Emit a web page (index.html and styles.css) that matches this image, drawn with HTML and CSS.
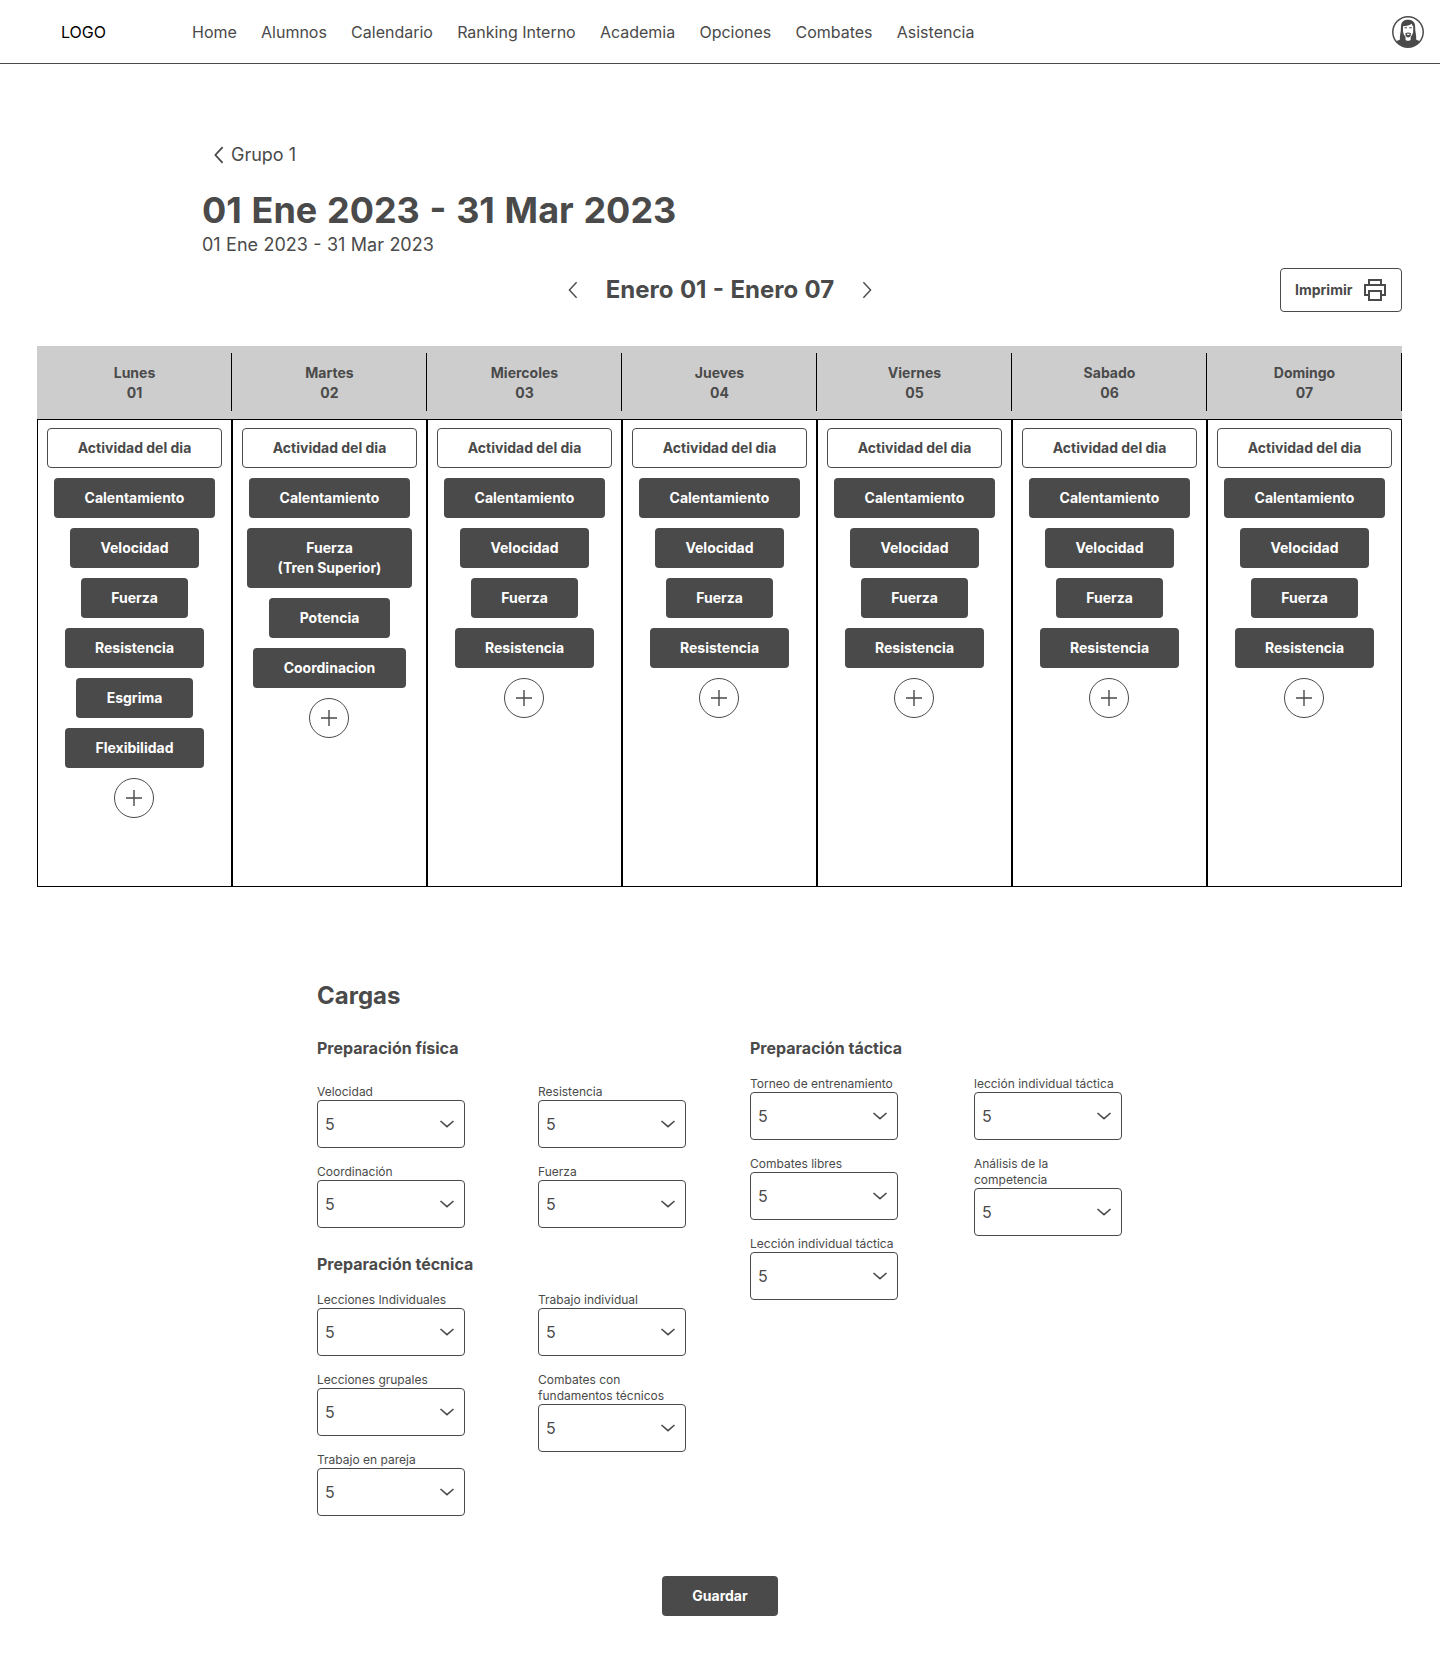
FILE: index.html
```html
<!DOCTYPE html>
<html lang="es">
<head>
<meta charset="utf-8">
<title>Grupo 1</title>
<link rel="stylesheet" href="styles.css">
</head>
<body>
<svg class="sprite" aria-hidden="true">
  <symbol id="left" viewBox="0 0 10 18"><path d="M8.6 1.2 1.4 9l7.2 7.8"/></symbol>
  <symbol id="right" viewBox="0 0 10 18"><path d="M1.4 1.2 8.6 9l-7.2 7.8"/></symbol>
  <symbol id="down" viewBox="0 0 16 8"><path d="M1.5 1 8 6.6 14.5 1"/></symbol>
  <symbol id="plus" viewBox="0 0 18 18"><path d="M9 1v16M1 9h16"/></symbol>
</svg>

<header class="topbar">
  <div class="logo">LOGO</div>
  <nav class="nav">
    <a>Home</a><a>Alumnos</a><a>Calendario</a><a>Ranking Interno</a><a>Academia</a><a>Opciones</a><a>Combates</a><a>Asistencia</a>
  </nav>
  <svg class="avatar" viewBox="0 0 32 32">
    <circle cx="16" cy="16" r="15.200" fill="#fff" stroke="#4a4a4a" stroke-width="1.500"/>
    <path fill="#4a4a4a" d="M15.500 3.800c3.500-.5 6.500 1.200 7.300 4.200.6 2.500.3 5.500.7 8 .4 2.500 1 4.800.6 7.500l3.600 1.700A15 15 0 0 1 16 31 15 15 0 0 1 4.300 25.200L8 23.500c-.4-2.700.2-5 .6-7.500.4-2.500.1-5.500.7-8 .6-2.400 3.300-4.400 6.200-4.200Z"/>
    <path fill="#fff" d="M11 10.300c3.800-.2 6.700-1 8.700-2.600.3 1.100.8 1.900 1.500 2.600v4.200c0 2.700-1 4.900-2.500 6.200v2.500c0 1-1.200 1.600-2.600 1.600s-2.600-.6-2.600-1.600v-2.500c-1.500-1.300-2.500-3.500-2.500-6.200Z"/>
    <path fill="#4a4a4a" d="M12.500 11.300H15v1h-2.500zM17.300 11.300h2.500v1h-2.500zM13.300 17.300c1.600-1.200 4.100-1.200 5.700 0l-.4 2.700c-.6.900-1.400 1.400-2.400 1.400s-1.900-.5-2.500-1.400Z"/>
    <path fill="#fff" d="M14.500 17.800h3.300c-.3.900-.9 1.300-1.600 1.300s-1.400-.4-1.700-1.300Z"/>
  </svg>
</header>

<main>
  <section class="intro">
    <a class="back"><svg class="chev bold"><use href="#left"/></svg>Grupo 1</a>
    <h1>01 Ene 2023 - 31 Mar 2023</h1>
    <p>01 Ene 2023 - 31 Mar 2023</p>
  </section>

  <section class="weekbar">
    <div class="week">
      <svg class="chev"><use href="#left"/></svg>
      <h2>Enero 01 - Enero 07</h2>
      <svg class="chev"><use href="#right"/></svg>
    </div>
    <button class="print">Imprimir
      <svg viewBox="0 0 22 22"><path d="M5 6V1h12v5M5 16H1V6h20v10h-4M5 12h12v9H5z"/></svg>
    </button>
  </section>

  <section class="calendar">
    <div class="day">
      <div class="dayhead"><span>Lunes<br>01</span></div>
      <div class="daybody">
        <button class="btn outline">Actividad del dia</button>
        <button class="btn">Calentamiento</button>
        <button class="btn">Velocidad</button>
        <button class="btn">Fuerza</button>
        <button class="btn">Resistencia</button>
        <button class="btn">Esgrima</button>
        <button class="btn">Flexibilidad</button>
        <button class="add"><svg><use href="#plus"/></svg></button>
      </div>
    </div>
    <div class="day">
      <div class="dayhead"><span>Martes<br>02</span></div>
      <div class="daybody">
        <button class="btn outline">Actividad del dia</button>
        <button class="btn">Calentamiento</button>
        <button class="btn">Fuerza<br>(Tren Superior)</button>
        <button class="btn">Potencia</button>
        <button class="btn">Coordinacion</button>
        <button class="add"><svg><use href="#plus"/></svg></button>
      </div>
    </div>
    <div class="day">
      <div class="dayhead"><span>Miercoles<br>03</span></div>
      <div class="daybody">
        <button class="btn outline">Actividad del dia</button>
        <button class="btn">Calentamiento</button>
        <button class="btn">Velocidad</button>
        <button class="btn">Fuerza</button>
        <button class="btn">Resistencia</button>
        <button class="add"><svg><use href="#plus"/></svg></button>
      </div>
    </div>
    <div class="day">
      <div class="dayhead"><span>Jueves<br>04</span></div>
      <div class="daybody">
        <button class="btn outline">Actividad del dia</button>
        <button class="btn">Calentamiento</button>
        <button class="btn">Velocidad</button>
        <button class="btn">Fuerza</button>
        <button class="btn">Resistencia</button>
        <button class="add"><svg><use href="#plus"/></svg></button>
      </div>
    </div>
    <div class="day">
      <div class="dayhead"><span>Viernes<br>05</span></div>
      <div class="daybody">
        <button class="btn outline">Actividad del dia</button>
        <button class="btn">Calentamiento</button>
        <button class="btn">Velocidad</button>
        <button class="btn">Fuerza</button>
        <button class="btn">Resistencia</button>
        <button class="add"><svg><use href="#plus"/></svg></button>
      </div>
    </div>
    <div class="day">
      <div class="dayhead"><span>Sabado<br>06</span></div>
      <div class="daybody">
        <button class="btn outline">Actividad del dia</button>
        <button class="btn">Calentamiento</button>
        <button class="btn">Velocidad</button>
        <button class="btn">Fuerza</button>
        <button class="btn">Resistencia</button>
        <button class="add"><svg><use href="#plus"/></svg></button>
      </div>
    </div>
    <div class="day">
      <div class="dayhead"><span>Domingo<br>07</span></div>
      <div class="daybody">
        <button class="btn outline">Actividad del dia</button>
        <button class="btn">Calentamiento</button>
        <button class="btn">Velocidad</button>
        <button class="btn">Fuerza</button>
        <button class="btn">Resistencia</button>
        <button class="add"><svg><use href="#plus"/></svg></button>
      </div>
    </div>
  </section>

  <section class="loads">
    <h2>Cargas</h2>
    <div class="groups">
      <div class="side">
        <div class="group physical">
          <h3>Preparación física</h3>
          <div class="fields">
            <div class="stack">
              <div class="field">Velocidad<div class="select">5<svg><use href="#down"/></svg></div></div>
              <div class="field">Coordinación<div class="select">5<svg><use href="#down"/></svg></div></div>
            </div>
            <div class="stack">
              <div class="field">Resistencia<div class="select">5<svg><use href="#down"/></svg></div></div>
              <div class="field">Fuerza<div class="select">5<svg><use href="#down"/></svg></div></div>
            </div>
          </div>
        </div>
        <div class="group">
          <h3>Preparación técnica</h3>
          <div class="fields">
            <div class="stack">
              <div class="field">Lecciones Individuales<div class="select">5<svg><use href="#down"/></svg></div></div>
              <div class="field">Lecciones grupales<div class="select">5<svg><use href="#down"/></svg></div></div>
              <div class="field">Trabajo en pareja<div class="select">5<svg><use href="#down"/></svg></div></div>
            </div>
            <div class="stack">
              <div class="field">Trabajo individual<div class="select">5<svg><use href="#down"/></svg></div></div>
              <div class="field">Combates con fundamentos técnicos<div class="select">5<svg><use href="#down"/></svg></div></div>
            </div>
          </div>
        </div>
      </div>
      <div class="group tactical">
        <h3>Preparación táctica</h3>
        <div class="fields">
          <div class="stack">
            <div class="field">Torneo de entrenamiento<div class="select">5<svg><use href="#down"/></svg></div></div>
            <div class="field">Combates libres<div class="select">5<svg><use href="#down"/></svg></div></div>
            <div class="field">Lección individual táctica<div class="select">5<svg><use href="#down"/></svg></div></div>
          </div>
          <div class="stack">
            <div class="field">lección individual táctica<div class="select">5<svg><use href="#down"/></svg></div></div>
            <div class="field">Análisis de la<br>competencia<div class="select">5<svg><use href="#down"/></svg></div></div>
          </div>
        </div>
      </div>
    </div>
  </section>

  <div class="actions"><button class="btn">Guardar</button></div>
</main>
</body>
</html>
```
FILE: styles.css
```css
* { box-sizing: border-box; }
body {
  margin: 0;
  min-height: 1671px;
  background: #fff;
  color: #4a4a4a;
  font-family: Inter, "Liberation Sans", sans-serif;
  font-size: 16px;
  line-height: 24px;
}
h1, h2, h3, p { margin: 0; }
h2 { font-size: 24px; line-height: 32px; }
h3 { font-size: 16px; line-height: 24px; }
button { font: inherit; color: inherit; margin: 0; }
svg { fill: none; stroke: #4a4a4a; flex: none; display: block; }
.sprite { display: none; }

.topbar {
  display: flex;
  align-items: center;
  height: 64px;
  padding: 0 16px 0 61px;
  border-bottom: 1px solid #4a4a4a;
}
.logo { width: 131px; color: #000; }
.nav { display: flex; gap: 24.2px; flex: 1; }
.avatar { width: 32px; height: 32px; stroke: none; }

.intro { padding: 79px 0 0 202px; font-size: 18px; }
.intro p { margin-top: 1px; word-spacing: 0.35px; }
.back { display: flex; align-items: center; gap: 7px; padding-left: 12px; }
.chev { width: 10px; height: 18px; stroke-width: 1.4; }
.chev.bold { stroke-width: 1.8; }
h1 { margin-top: 21px; font-size: 36px; line-height: 44px; word-spacing: 1.2px; }

.weekbar {
  display: grid;
  grid-template-columns: 1fr auto 1fr;
  align-items: center;
  margin-top: 11px;
  padding: 0 38px;
}
.week { grid-column: 2; display: flex; align-items: center; gap: 28px; word-spacing: 0.7px; }
.print {
  justify-self: end;
  display: flex;
  align-items: center;
  justify-content: space-between;
  width: 122px;
  height: 44px;
  padding: 0 15px 0 14px;
  border: 1px solid #4a4a4a;
  border-radius: 4px;
  background: #fff;
  font-size: 14px;
  font-weight: 700;
}
.print svg { width: 22px; height: 22px; stroke-width: 2; }

.calendar {
  display: grid;
  grid-template-columns: repeat(7, 195px);
  justify-content: center;
  margin: 34px 1px 0 0;
  font-size: 14px;
  line-height: 20px;
  font-weight: 700;
  text-align: center;
}
.dayhead { height: 73px; padding: 7px 0 8px; background: #cdcdcd; }
.dayhead span { display: block; height: 58px; padding: 10px 0 0 1px; border-right: 1px solid #000; }
.daybody {
  display: flex;
  flex-direction: column;
  align-items: center;
  gap: 10px;
  height: 468px;
  padding-top: 8px;
  border: 1px solid #000;
}
.btn {
  padding: 10px 30.4px;
  border: 0;
  border-radius: 4px;
  background: #4a4a4a;
  color: #fff;
  font-size: 14px;
  line-height: 20px;
  font-weight: 700;
  white-space: nowrap;
}
.outline { padding: 9px 29.5px; border: 1px solid #4a4a4a; background: #fff; color: #4a4a4a; }
.add {
  display: grid;
  place-items: center;
  width: 40px;
  height: 40px;
  margin-right: 1px;
  padding: 0;
  border: 1px solid #4a4a4a;
  border-radius: 50%;
  background: #fff;
}
.add svg { width: 18px; height: 18px; stroke-width: 1.4; }

.loads { width: 805px; margin: 93px 0 0 317px; }
.groups { display: flex; gap: 64px; margin-top: 24px; }
.side { display: flex; flex-direction: column; gap: 24px; }
.group { display: flex; flex-direction: column; gap: 16px; }
.physical { gap: 24px; }
.fields { display: flex; gap: 73px; }
.tactical .fields { gap: 76px; }
.stack { display: flex; flex-direction: column; gap: 16px; width: 148px; }
.field { font-size: 12px; line-height: 16px; }
.select {
  display: flex;
  align-items: center;
  justify-content: space-between;
  height: 48px;
  padding: 0 9px 0 7px;
  border: 1px solid #4a4a4a;
  border-radius: 4px;
  font-size: 16px;
}
.select svg { width: 16px; height: 8px; stroke-width: 1.6; }
.actions { display: flex; justify-content: center; margin-top: 60px; }
```
